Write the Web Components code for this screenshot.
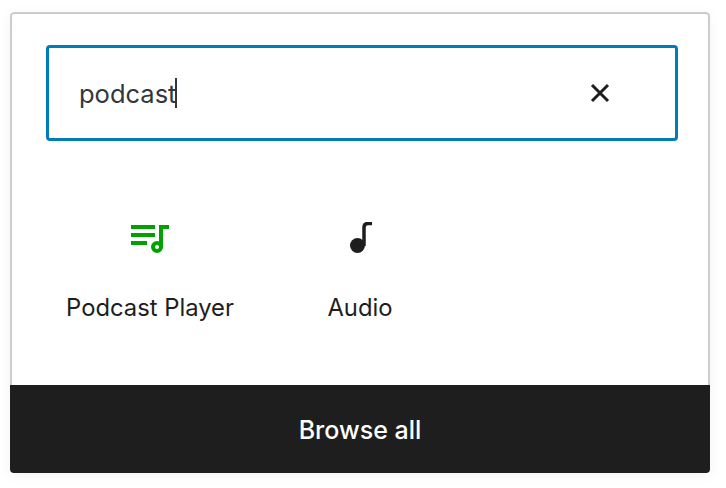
<!DOCTYPE html>
<html lang="en">
  <head>
    <meta charset="UTF-8" />
    <title>Block inserter</title>
    <style>
      html, body {
        margin: 0;
        height: 100%;
        background: #fff;
      }
      body {
        box-sizing: border-box;
        padding: 12px 16px 15px 10px;
        font-family: Inter, "Liberation Sans", sans-serif;
        color: #1e1e1e;
      }
    </style>
  </head>
  <body>
    <block-inserter>
      <search-box value="podcast"></search-box>
      <block-item label="Podcast Player" style="color: #00a100">
        <svg width="48" height="48" viewBox="0 0 48 48" fill="none">
          <path d="M5 3h24v4H5zM5 11h24v4H5zM5 19h16v4H5z" fill="currentColor" />
          <path d="M35 25V5h8" stroke="currentColor" stroke-width="4" />
          <circle cx="31" cy="25" r="4" stroke="currentColor" stroke-width="4" />
        </svg>
      </block-item>
      <block-item label="Audio">
        <svg width="48" height="48" viewBox="0 0 48 48" fill="none">
          <circle cx="21.500" cy="23.500" r="7.500" fill="currentColor" />
          <path d="M28 24V5.500q0-4 4-4h4" stroke="currentColor" stroke-width="3.500" />
        </svg>
      </block-item>
    </block-inserter>

    <template id="block-inserter-template">
      <style>
        :host {
          display: flex;
          flex-direction: column;
          height: 461px;
          box-sizing: border-box;
          border-radius: 4px;
          box-shadow: 0 3px 14px rgba(0, 0, 0, 0.05);
          overflow: hidden;
        }
        .body {
          flex: 1;
          box-sizing: border-box;
          border: 2px solid #cccccc;
          border-bottom: 0;
          border-radius: 4px 4px 0 0;
          padding: 31px 30px 0 34px;
          background: #fff;
        }
        .results {
          display: grid;
          grid-template-columns: repeat(3, 210px);
          margin: 81px 0 0 -1px;
        }
        .browse {
          flex: none;
          height: 88px;
          box-sizing: border-box;
          padding-top: 1px;
          display: flex;
          align-items: center;
          justify-content: center;
          background: #1e1e1e;
          color: #fff;
          font-size: 25px;
          font-weight: 500;
        }
      </style>
      <div class="body">
        <slot name="search"></slot>
        <div class="results"><slot></slot></div>
      </div>
      <div class="browse">Browse all</div>
    </template>

    <template id="search-box-template">
      <style>
        :host {
          display: flex;
          align-items: center;
          justify-content: space-between;
          height: 96px;
          box-sizing: border-box;
          border: 3px solid #007cba;
          border-radius: 4px;
          padding: 0 65px 0 30px;
          font-size: 25.500px;
          color: #32373c;
        }
        .field {
          display: flex;
          align-items: center;
        }
        .caret {
          width: 2px;
          height: 30px;
          background: #32373c;
          margin-left: -1px;
        }
        svg {
          display: block;
          color: #1e1e1e;
        }
      </style>
      <div class="field"><span class="value"></span><span class="caret"></span></div>
      <svg width="20" height="20" viewBox="0 0 20 20" fill="none">
        <path d="M2 2l16 16M18 2L2 18" stroke="currentColor" stroke-width="3" />
      </svg>
    </template>

    <template id="block-item-template">
      <style>
        :host {
          display: flex;
          flex-direction: column;
          align-items: center;
          font-size: 23.800px;
          color: #1e1e1e;
        }
        .icon {
          height: 48px;
          color: var(--icon-color, #1e1e1e);
        }
        .label {
          margin-top: 23px;
          line-height: 30px;
          color: #1e1e1e;
        }
      </style>
      <div class="icon"><slot></slot></div>
      <div class="label"></div>
    </template>

    <script>
      class BlockInserter extends HTMLElement {
        constructor() {
          super();
          const template = document.getElementById("block-inserter-template");
          const shadow = this.attachShadow({ mode: "open" });
          shadow.appendChild(template.content.cloneNode(true));
        }
        connectedCallback() {
          const search = this.querySelector("search-box");
          if (search) search.setAttribute("slot", "search");
        }
      }
      customElements.define("block-inserter", BlockInserter);

      class SearchBox extends HTMLElement {
        constructor() {
          super();
          const template = document.getElementById("search-box-template");
          const shadow = this.attachShadow({ mode: "open" });
          shadow.appendChild(template.content.cloneNode(true));
        }
        connectedCallback() {
          this.shadowRoot.querySelector(".value").textContent = this.getAttribute("value");
        }
      }
      customElements.define("search-box", SearchBox);

      class BlockItem extends HTMLElement {
        constructor() {
          super();
          const template = document.getElementById("block-item-template");
          const shadow = this.attachShadow({ mode: "open" });
          shadow.appendChild(template.content.cloneNode(true));
        }
        connectedCallback() {
          this.shadowRoot.querySelector(".label").textContent = this.getAttribute("label");
          this.style.setProperty("--icon-color", this.style.color || "#1e1e1e");
        }
      }
      customElements.define("block-item", BlockItem);
    </script>
  </body>
</html>
